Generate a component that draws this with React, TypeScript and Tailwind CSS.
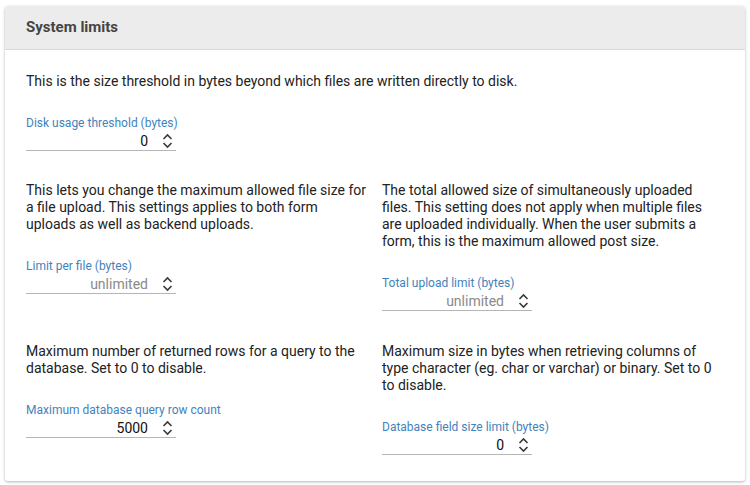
import React from "react";

function Spinner() {
  return (
    <svg width="11" height="16" viewBox="0 0 11 16" fill="none" className="shrink-0">
      <path d="M1.5 6 L5.5 2 L9.5 6" stroke="#3a3a3a" strokeWidth="1.6" />
      <path d="M1.5 10 L5.5 14 L9.5 10" stroke="#3a3a3a" strokeWidth="1.6" />
    </svg>
  );
}

function NumberField({ label, value, placeholder }: { label: string; value?: string; placeholder?: string }) {
  return (
    <div className="w-[150px]">
      <div className="text-[12px] leading-[14px] text-[#3f83bd] whitespace-nowrap">{label}</div>
      <div className="mt-[1px] flex h-[20px] items-center border-b border-[#b5b5b5]">
        <div className="flex-1 pr-[14px] text-right text-[14px] leading-[18px]">
          {value ? (
            <span className="text-[#111]">{value}</span>
          ) : (
            <span className="text-[#8a8a8a]">{placeholder}</span>
          )}
        </div>
        <div className="mr-[3px]">
          <Spinner />
        </div>
      </div>
    </div>
  );
}

function Setting({ text, label, value, placeholder }: { text: string; label: string; value?: string; placeholder?: string }) {
  return (
    <div>
      <p className="mb-[26px] text-[14px] leading-[17px] text-[#222]">{text}</p>
      <NumberField label={label} value={value} placeholder={placeholder} />
    </div>
  );
}

export default function App() {
  return (
    <div className="h-[485px] w-[750px] bg-white pl-[5px] pt-[6px] font-['Roboto','Liberation_Sans',sans-serif]">
      <div className="w-[740px] overflow-hidden rounded-[3px] bg-white shadow-[0_1px_3px_rgba(0,0,0,0.3)]">
        <div className="flex h-[44px] items-center border-b border-[#d9d9d9] bg-[#ececec] px-[21px]">
          <h2 className="text-[15px] font-bold text-[#444]">System limits</h2>
        </div>
        <div className="px-[21px] pb-[26px] pt-[23px]">
          <Setting
            text="This is the size threshold in bytes beyond which files are written directly to disk."
            label="Disk usage threshold (bytes)"
            value="0"
          />
          <div className="mt-[31px] grid grid-cols-2 gap-x-[14px] gap-y-[32px]">
            <Setting
              text="This lets you change the maximum allowed file size for a file upload. This settings applies to both form uploads as well as backend uploads."
              label="Limit per file (bytes)"
              placeholder="unlimited"
            />
            <Setting
              text="The total allowed size of simultaneously uploaded files. This setting does not apply when multiple files are uploaded individually. When the user submits a form, this is the maximum allowed post size."
              label="Total upload limit (bytes)"
              placeholder="unlimited"
            />
            <Setting
              text="Maximum number of returned rows for a query to the database. Set to 0 to disable."
              label="Maximum database query row count"
              value="5000"
            />
            <Setting
              text="Maximum size in bytes when retrieving columns of type character (eg. char or varchar) or binary. Set to 0 to disable."
              label="Database field size limit (bytes)"
              value="0"
            />
          </div>
        </div>
      </div>
    </div>
  );
}
